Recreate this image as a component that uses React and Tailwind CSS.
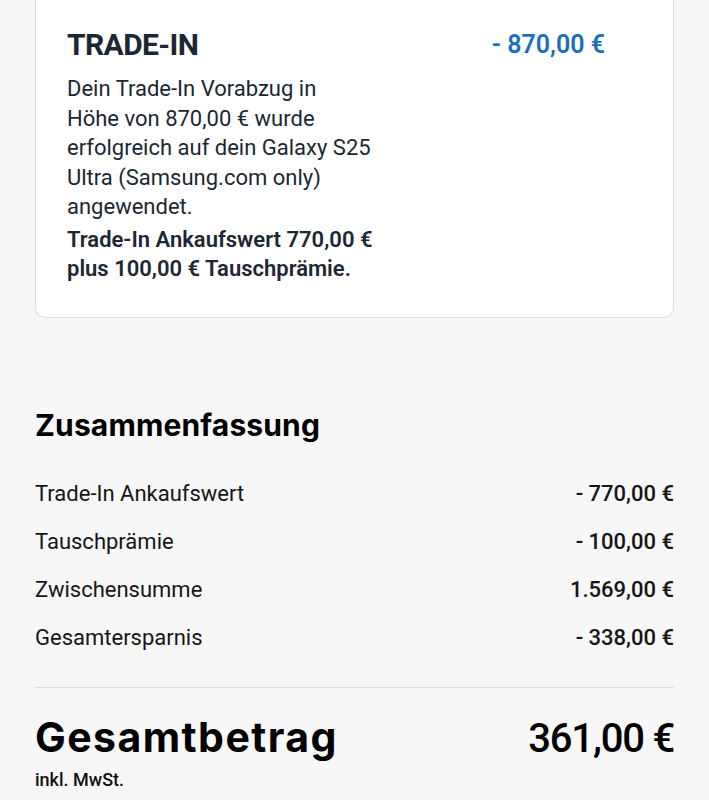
import React from 'react';

const body = { fontFamily: 'Roboto, "Noto Sans", sans-serif' };
const display = { fontFamily: 'Inter, "Noto Sans", sans-serif' };

const rows = [
    { label: 'Trade-In Ankaufswert', value: '- 770,00 €' },
    { label: 'Tauschprämie', value: '- 100,00 €' },
    { label: 'Zwischensumme', value: '1.569,00 €' },
    { label: 'Gesamtersparnis', value: '- 338,00 €' },
];

export default function App() {
    return (
        <div className="min-h-[800px] w-[709px] bg-[#f7f7f7] overflow-hidden" style={body}>
            <div className="px-[35px]">
                {/* Trade-in card */}
                <div className="bg-white border border-t-0 border-[#dedede] rounded-b-[10px] pt-[27px] pb-[33px] pl-[31px] pr-[68px] flex justify-between">
                    <div className="text-[#1c2733]">
                        <h2 className="text-[30px] leading-[36px] font-bold tracking-[-0.02em]">TRADE-IN</h2>
                        <p className="mt-[11px] text-[22px] leading-[29.5px]">
                            Dein Trade-In Vorabzug in<br />
                            Höhe von 870,00 € wurde<br />
                            erfolgreich auf dein Galaxy S25<br />
                            Ultra (Samsung.com only)<br />
                            angewendet.
                        </p>
                        <p className="mt-[3px] text-[22px] leading-[29.5px] font-semibold">
                            Trade-In Ankaufswert 770,00 €<br />
                            plus 100,00 € Tauschprämie.
                        </p>
                    </div>
                    <div className="text-[25px] leading-[36px] font-semibold text-[#1b6dc1] whitespace-nowrap">- 870,00 €</div>
                </div>

                {/* Summary */}
                <h3 className="mt-[89px] text-[30px] leading-[36px] font-bold text-black tracking-[0.005em]" style={display}>Zusammenfassung</h3>

                <div className="mt-[37px] flex flex-col gap-[20px]">
                    {rows.map(r => (
                        <div key={r.label} className="flex justify-between text-[22px] leading-[28px] text-[#161616]">
                            <span>{r.label}</span>
                            <span className="font-medium">{r.value}</span>
                        </div>
                    ))}
                </div>

                <div className="mt-[35px] h-px bg-[#dcdcdc]" />

                <div className="mt-[25px] flex justify-between items-baseline">
                    <span className="text-[41px] leading-[48px] font-bold text-black tracking-[0.035em]" style={display}>Gesamtbetrag</span>
                    <span className="text-[40px] leading-[48px] font-medium text-black tracking-[-0.03em]">361,00 €</span>
                </div>
                <div className="mt-[7px] text-[18px] leading-[20px] font-medium text-[#111]">inkl. MwSt.</div>
            </div>
        </div>
    );
}
